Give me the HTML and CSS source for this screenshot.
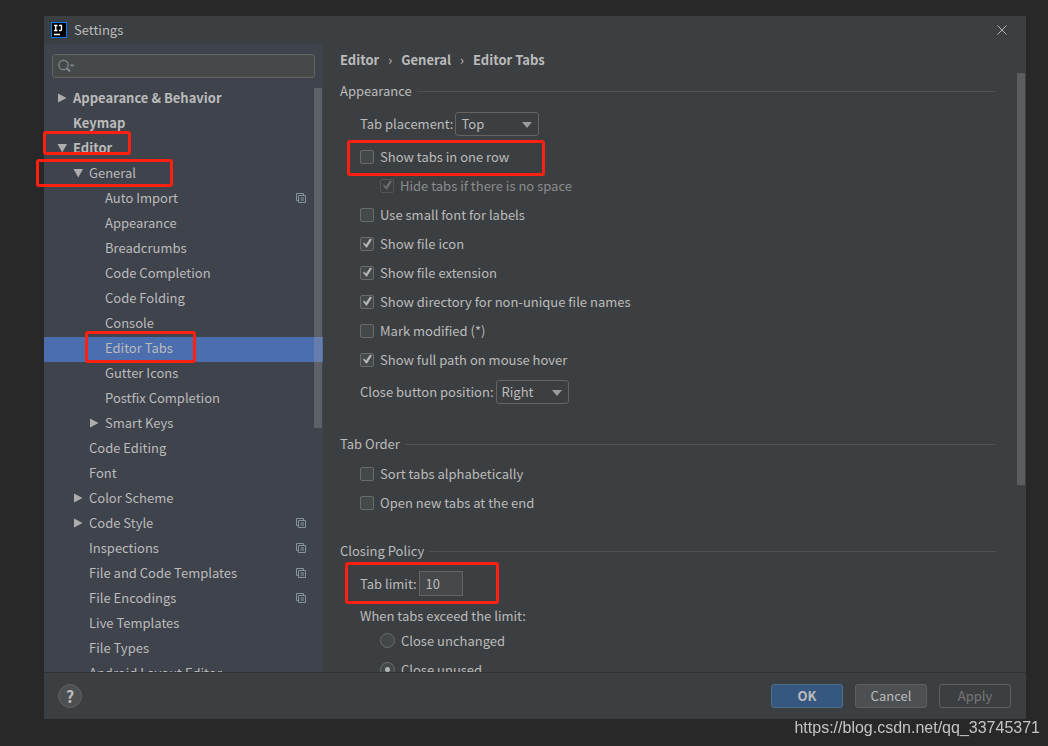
FILE: index.html
```html
<!DOCTYPE html>
<html lang="en">
<head>
<meta charset="utf-8">
<title>Settings</title>
<link rel="stylesheet" href="styles.css">
</head>
<body>
<svg class="defs" aria-hidden="true">
  <symbol id="right" viewBox="0 0 10 10"><path d="M1 .5L9.500 5L1 9.500Z"/></symbol>
  <symbol id="down" viewBox="0 0 10 10"><path d="M.5 1H10L5.250 9.500Z"/></symbol>
  <symbol id="copy" viewBox="0 0 10 10"><path d="M2 7.500H.5V.5H7.500V2M3 2.500H9.500V9.500H2.500V2.500M4.500 5H8M4.500 7H8" fill="none" stroke="#87939a"/></symbol>
</svg>
<main class="window">
  <header class="titlebar">
    <svg class="logo" viewBox="0 0 16 16"><rect width="16" height="16" fill="#087cfa"/><rect x="1" y="1" width="14" height="14" fill="#000"/><path d="M3 3.500H6.500M4.750 3.500V8.500M3 8.500H6.500M8 3.500H10.500V7.500Q10.500 8.500 9.500 8.500H8M3 12.500H9" fill="none" stroke="#fff" stroke-width="1.300"/></svg>
    <h1 class="title">Settings</h1>
    <button class="close" aria-label="Close"><svg viewBox="0 0 10 10"><path d="M.5 .5L9.500 9.500M9.500 .5L.5 9.500" stroke="#b0b2b3"/></svg></button>
  </header>
  <div class="body">
    <aside class="sidebar">
      <div class="search">
        <svg class="search-icon" viewBox="0 0 18 14"><circle cx="5.500" cy="6" r="4.700" fill="none" stroke="#7f8b91" stroke-width="1.200"/><path d="M9 9.500L12 12.500" stroke="#7f8b91" stroke-width="1.800"/><path d="M11.500 5.500H16.500L14 8Z" fill="#7f8b91"/></svg>
        <input class="search-input" type="text" aria-label="Search settings">
      </div>
      <nav class="tree" aria-label="Settings categories">
        <a href="#" class="row top"><svg class="arrow"><use href="#right"/></svg>Appearance &amp; Behavior</a>
        <a href="#" class="row top"><span class="arrow"></span>Keymap</a>
        <a href="#" class="row top"><svg class="arrow"><use href="#down"/></svg>Editor<span class="mark mark-editor"></span></a>
        <a href="#" class="row second"><svg class="arrow"><use href="#down"/></svg>General<span class="mark mark-general"></span></a>
        <a href="#" class="row third"><span class="arrow"></span>Auto Import<svg class="copy"><use href="#copy"/></svg></a>
        <a href="#" class="row third"><span class="arrow"></span>Appearance</a>
        <a href="#" class="row third"><span class="arrow"></span>Breadcrumbs</a>
        <a href="#" class="row third"><span class="arrow"></span>Code Completion</a>
        <a href="#" class="row third"><span class="arrow"></span>Code Folding</a>
        <a href="#" class="row third"><span class="arrow"></span>Console</a>
        <a href="#" class="row third selected" aria-current="page"><span class="arrow"></span>Editor Tabs<span class="mark mark-tabs"></span></a>
        <a href="#" class="row third"><span class="arrow"></span>Gutter Icons</a>
        <a href="#" class="row third"><span class="arrow"></span>Postfix Completion</a>
        <a href="#" class="row third"><svg class="arrow"><use href="#right"/></svg>Smart Keys</a>
        <a href="#" class="row second"><span class="arrow"></span>Code Editing</a>
        <a href="#" class="row second"><span class="arrow"></span>Font</a>
        <a href="#" class="row second"><svg class="arrow"><use href="#right"/></svg>Color Scheme</a>
        <a href="#" class="row second"><svg class="arrow"><use href="#right"/></svg>Code Style<svg class="copy"><use href="#copy"/></svg></a>
        <a href="#" class="row second"><span class="arrow"></span>Inspections<svg class="copy"><use href="#copy"/></svg></a>
        <a href="#" class="row second"><span class="arrow"></span>File and Code Templates<svg class="copy"><use href="#copy"/></svg></a>
        <a href="#" class="row second"><span class="arrow"></span>File Encodings<svg class="copy"><use href="#copy"/></svg></a>
        <a href="#" class="row second"><span class="arrow"></span>Live Templates</a>
        <a href="#" class="row second"><span class="arrow"></span>File Types</a>
        <a href="#" class="row second"><span class="arrow"></span>Android Layout Editor</a>
        <span class="thumb tree-thumb"></span>
      </nav>
    </aside>
    <section class="content">
      <nav class="crumbs" aria-label="Breadcrumb"><span>Editor</span><span class="sep">›</span><span>General</span><span class="sep">›</span><span>Editor Tabs</span></nav>
      <div class="page">
        <h2 class="heading">Appearance</h2>
        <div class="group">
          <div class="field placement"><label for="placement">Tab placement:</label><span class="combo wide"><select id="placement"><option>Top</option></select><svg class="caret" viewBox="0 0 10 6"><path d="M0 0H10L5 6Z"/></svg></span></div>
          <label class="option"><input type="checkbox">Show tabs in one row<span class="mark mark-row"></span></label>
          <label class="option nested disabled"><input type="checkbox" checked disabled>Hide tabs if there is no space</label>
          <label class="option"><input type="checkbox">Use small font for labels</label>
          <label class="option"><input type="checkbox" checked>Show file icon</label>
          <label class="option"><input type="checkbox" checked>Show file extension</label>
          <label class="option"><input type="checkbox" checked>Show directory for non-unique file names</label>
          <label class="option"><input type="checkbox">Mark modified (*)</label>
          <label class="option"><input type="checkbox" checked>Show full path on mouse hover</label>
          <div class="field position"><label for="position">Close button position:</label><span class="combo"><select id="position"><option>Right</option></select><svg class="caret" viewBox="0 0 10 6"><path d="M0 0H10L5 6Z"/></svg></span></div>
        </div>
        <h2 class="heading">Tab Order</h2>
        <div class="group order">
          <label class="option"><input type="checkbox">Sort tabs alphabetically</label>
          <label class="option"><input type="checkbox">Open new tabs at the end</label>
        </div>
        <h2 class="heading">Closing Policy</h2>
        <div class="group closing">
          <div class="field"><label for="limit">Tab limit:</label><input class="limit" id="limit" type="text" value="10"><span class="mark mark-limit"></span></div>
          <fieldset class="policy">
            <legend>When tabs exceed the limit:</legend>
            <label class="option nested"><input type="radio" name="policy">Close unchanged</label>
            <label class="option nested"><input type="radio" name="policy" checked>Close unused</label>
          </fieldset>
        </div>
      </div>
      <span class="thumb page-thumb"></span>
    </section>
  </div>
  <footer class="footer">
    <button class="help" aria-label="Help">?</button>
    <button class="button primary">OK</button>
    <button class="button">Cancel</button>
    <button class="button" disabled>Apply</button>
  </footer>
</main>
<div class="watermark">https://blog.csdn.net/qq_33745371</div>
</body>
</html>
```
FILE: styles.css
```css
* { box-sizing: border-box; }
body {
  margin: 0;
  height: 100vh;
  padding: 16px 22px 27px 44px;
  background: #282828;
  color: #bbbbbb;
  font: 13px/20px "Noto Sans CJK SC", "Noto Sans", sans-serif;
  overflow: hidden;
}
button, input, select { font: inherit; color: inherit; margin: 0; }
h1, h2 { margin: 0; font-size: 13px; font-weight: 400; }
svg { display: block; }
.defs { display: none; }

.window { height: 100%; display: flex; flex-direction: column; background: #3c3f41; }
.titlebar { display: flex; align-items: center; height: 28px; padding: 0 19px 0 7px; }
.logo { width: 16px; height: 16px; margin-right: 7px; }
.close { margin-left: auto; padding: 0; border: 0; background: none; }
.close svg { width: 10px; height: 10px; }
.body { flex: 1; min-height: 0; display: flex; }

.sidebar { flex: none; width: 279px; display: flex; flex-direction: column; padding-top: 10px; background: #3f434c; }
.search { display: flex; align-items: center; height: 24px; margin: 0 8px 9px; padding-left: 5px; background: #45494a; border: 1px solid #646464; border-radius: 3px; }
.search-icon { width: 18px; height: 14px; }
.search-input { flex: 1; min-width: 0; border: 0; background: none; outline: 0; }
.tree { position: relative; flex: 1; min-height: 0; clip-path: inset(0 0 0 -10px); }
.row { position: relative; display: flex; align-items: center; height: 25px; padding: 0 17px 3px 0; color: inherit; text-decoration: none; white-space: nowrap; }
.top { padding-left: 13px; font-weight: 700; }
.second { padding-left: 29px; }
.third { padding-left: 45px; }
.selected { background: #4b6eaf; }
.arrow { flex: none; width: 10px; height: 10px; margin-right: 6px; fill: #adadad; }
.copy { width: 10px; height: 10px; margin-left: auto; }
.thumb { position: absolute; width: 8px; background: #a6a6a64d; }
.tree-thumb { right: 1px; top: 1px; height: 340px; }
.page-thumb { right: 1px; top: 29px; height: 412px; }

.content { position: relative; flex: 1; min-width: 0; overflow: hidden; padding: 0 30px 0 17px; }
.crumbs { display: flex; align-items: center; height: 32px; font-weight: 700; }
.sep { width: 22px; text-align: center; font-weight: 400; }
.page { padding-top: 5px; }
.heading { display: flex; align-items: center; gap: 5px; height: 20px; }
.heading::after { content: ""; flex: 1; height: 1px; background: #515151; }
.group { padding: 11px 0 30px 20px; }
.order { padding: 5px 0 24px 20px; }
.closing { padding-top: 10px; }
.field { position: relative; display: flex; align-items: center; gap: 2px; }
.placement { margin-bottom: 6px; }
.position { margin-top: 6px; }
.combo { position: relative; width: 73px; height: 24px; }
.wide { width: 84px; }
.combo select { width: 100%; height: 24px; padding: 0 20px 0 5px; border: 1px solid #646464; border-radius: 3px; background: #3c3f41; appearance: none; }
.caret { position: absolute; right: 7px; top: 10px; width: 10px; height: 6px; fill: #9a9da0; pointer-events: none; }
.option { position: relative; display: flex; align-items: center; gap: 6px; height: 29px; }
.nested { margin-left: 20px; }
.disabled { color: #8c8c8c; }
.option input { appearance: none; width: 14px; height: 14px; border: 1px solid #6b6b6b; border-radius: 2px; background: #43494a; }
.option input:checked::before { content: ""; display: block; width: 12px; height: 12px; background: #b4b4b4; clip-path: polygon(2px 6px, 3px 5px, 5px 7px, 9px 1px, 11px 2px, 6px 10px, 5px 10px); }
.option input:disabled { background: none; border-color: #545556; }
.option input:disabled:checked::before { background: #6c6e6f; }
.option input[type="radio"] { width: 15px; height: 15px; border-radius: 50%; }
.option input[type="radio"]:checked::before { width: 5px; height: 5px; margin: 4px; border-radius: 50%; clip-path: none; }
.limit { width: 44px; height: 25px; padding: 0 6px; border: 1px solid #646464; background: #45494a; }
.policy { margin: 10px 0 0; padding: 0; border: 0; }
.policy legend { padding: 0; }

.footer { display: flex; align-items: center; gap: 12px; height: 47px; padding: 0 15px 0 14px; border-top: 1px solid #323232; }
.help { width: 24px; height: 24px; margin-right: auto; padding: 0; border: 1px solid #5e6060; border-radius: 50%; background: #4c5052; font-size: 16px; font-weight: 700; line-height: 20px; }
.button { width: 72px; height: 24px; padding: 0; border: 1px solid #5e6060; border-radius: 3px; background: #4c5052; }
.primary { background: #365880; border-color: #4c708c; font-weight: 700; }
.button:disabled { background: none; color: #777777; }

.mark { position: absolute; z-index: 2; border: 3px solid #ff2012; border-radius: 3px; pointer-events: none; }
.mark-editor { left: -1px; top: -6px; width: 88px; height: 24px; }
.mark-general { left: -8px; top: -3px; width: 137px; height: 28px; }
.mark-tabs { left: 41px; top: -6px; width: 111px; height: 32px; }
.mark-row { left: -13px; top: -2px; width: 198px; height: 36px; }
.mark-limit { left: -15px; top: -9px; width: 154px; height: 42px; }
.watermark { position: fixed; right: 8px; bottom: 8px; font: 16px/20px "Liberation Sans", Arial, sans-serif; color: #c4c4c4; }
```
